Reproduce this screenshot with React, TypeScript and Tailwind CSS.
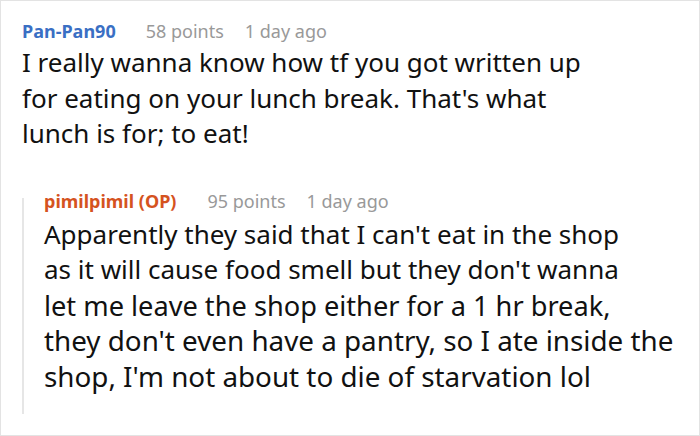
import React from "react";

export default function App() {
  return (
    <div
      className="w-[700px] h-[436px] bg-white border border-[#e3e3e3] overflow-hidden"
      style={{ fontFamily: '"Noto Sans", sans-serif' }}
    >
      <div className="pl-[21px] pt-[17px]">
        <div className="flex items-baseline text-[18px] leading-[26px]">
          <span className="font-bold text-[#3a6fc4]">Pan-Pan90</span>
          <span className="ml-[30px] text-[#999999]">58 points</span>
          <span className="ml-[21px] text-[#999999]">1 day ago</span>
        </div>
        <p className="mt-[1px] text-[26px] leading-[35.5px] text-[#111111]">
          I really wanna know how tf you got written up
          <br />
          for eating on your lunch break. That's what
          <br />
          lunch is for; to eat!
        </p>
        <div className="mt-[36px] flex">
          <div className="w-[2px] bg-[#e6e6e6] mt-[10px] mb-[-20px]" />
          <div className="pl-[20px]">
            <div className="flex items-baseline text-[18px] leading-[26px]">
              <span className="font-bold text-[#d5531f]">pimilpimil (OP)</span>
              <span className="ml-[31px] text-[#999999]">95 points</span>
              <span className="ml-[21px] text-[#999999]">1 day ago</span>
            </div>
            <p className="mt-[3px] text-[#111111] whitespace-nowrap">
              <span className="block text-[26px] leading-[35.6px]">
                Apparently they said that I can't eat in the shop
              </span>
              <span className="block text-[26px] leading-[35.6px]">
                as it will cause food smell but they don't wanna
              </span>
              <span className="block text-[27.2px] leading-[35.6px]">
                let me leave the shop either for a 1 hr break,
              </span>
              <span className="block text-[27.8px] leading-[35.6px]">
                they don't even have a pantry, so I ate inside the
              </span>
              <span className="block text-[27.8px] leading-[35.6px]">
                shop, I'm not about to die of starvation lol
              </span>
            </p>
          </div>
        </div>
      </div>
    </div>
  );
}
